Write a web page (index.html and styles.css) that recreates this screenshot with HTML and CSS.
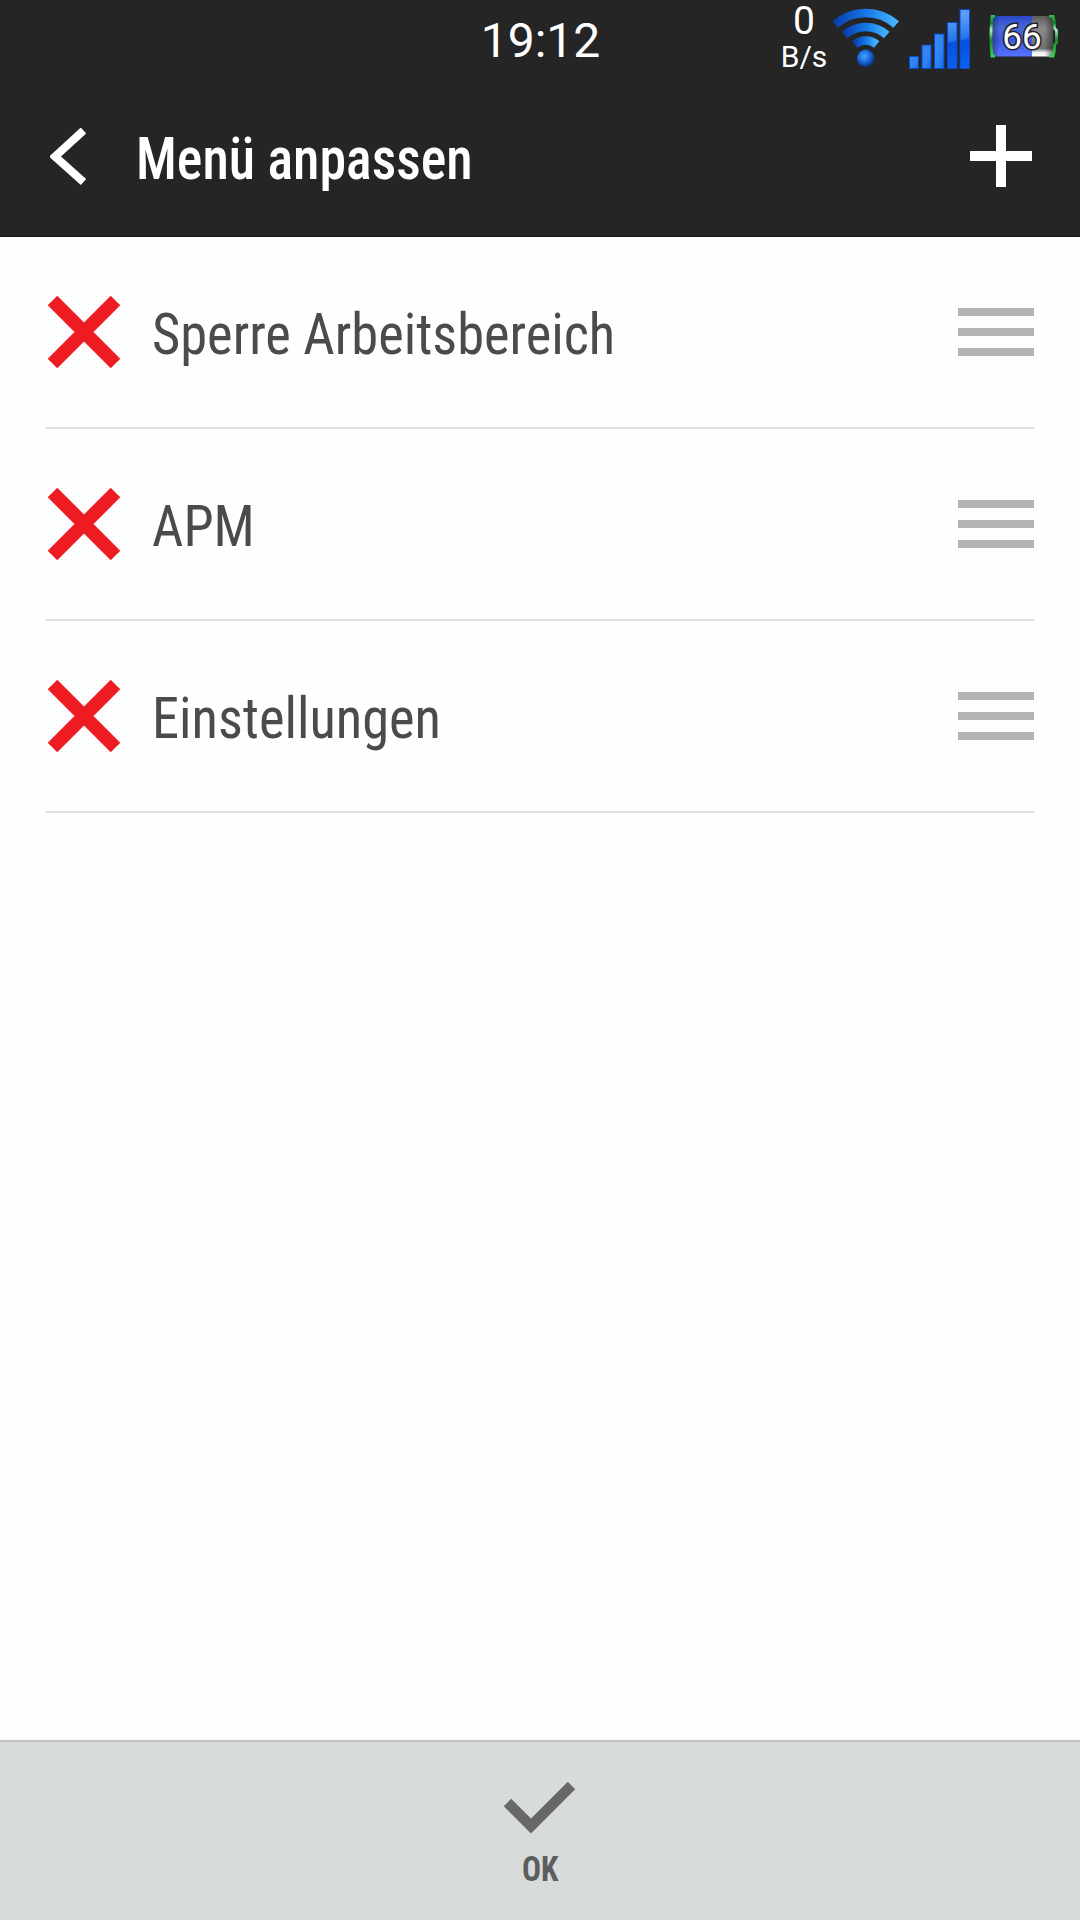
FILE: index.html
```html
<!DOCTYPE html>
<html lang="de">
<head>
<meta charset="utf-8">
<title>Menü anpassen</title>
<link rel="stylesheet" href="styles.css">
</head>
<body>
<div class="screen">
  <header class="header">
    <div class="status">
      <span class="clock">19:12</span>
      <div class="tray">
        <div class="speed"><span class="speed-value">0</span><span class="speed-unit">B/s</span></div>
        <svg class="wifi" width="70" height="68" viewBox="0 0 70 68">
          <defs>
            <linearGradient id="arc" x1="0" x2="1" y1="0" y2="0"><stop offset="0" stop-color="#0a3fae"/><stop offset=".5" stop-color="#1477e6"/><stop offset="1" stop-color="#45b4ff"/></linearGradient>
            <radialGradient id="dot" cx=".42" cy=".38" r=".62"><stop offset="0" stop-color="#48a5fb"/><stop offset=".5" stop-color="#1c6fe0"/><stop offset="1" stop-color="#0b3080"/></radialGradient>
          </defs>
          <g fill="none" stroke="url(#arc)" stroke-width="8.500">
            <path d="M5.200 24.500A46 46 0 0 1 66.200 24.500"/>
            <path d="M14.700 35A31.800 31.800 0 0 1 56.700 35"/>
            <path d="M24.700 44.500A17.500 17.500 0 0 1 46.700 44.500"/>
          </g>
          <circle cx="35.700" cy="58.300" r="8.700" fill="url(#dot)"/>
        </svg>
        <svg class="signal" width="62" height="62" viewBox="0 0 62 62">
          <defs>
            <linearGradient id="bar" gradientUnits="userSpaceOnUse" x1="38" x2="48" y1="10" y2="60"><stop offset="0" stop-color="#5a9dfa"/><stop offset=".45" stop-color="#2775ee"/><stop offset=".5" stop-color="#0750df"/><stop offset="1" stop-color="#0b62ee"/></linearGradient>
            <linearGradient id="low" x1="0" x2="1" y1="0" y2="1"><stop offset="0" stop-color="#3a86f2"/><stop offset=".6" stop-color="#2f82f2"/><stop offset="1" stop-color="#1268ee"/></linearGradient>
          </defs>
          <g fill="url(#low)" stroke="#0a48c4" stroke-width="1">
            <rect x=".5" y="48.500" width="9" height="12"/>
            <rect x="13" y="37" width="9" height="23.500"/>
            <rect x="25.500" y="26" width="9.500" height="34.500"/>
          </g>
          <g fill="url(#bar)" stroke="#0a48c4" stroke-width="1">
            <rect x="38.500" y="14.500" width="9.500" height="46"/>
            <rect x="51" y="1.500" width="9.500" height="59"/>
          </g>
        </svg>
        <svg class="battery" width="69" height="44" viewBox="0 0 69 44">
          <defs>
            <linearGradient id="charge" x1="0" x2="0" y1="0" y2="1"><stop offset="0" stop-color="#2947c8"/><stop offset=".3" stop-color="#4a68da"/><stop offset=".6" stop-color="#3c59e4"/><stop offset="1" stop-color="#5573ff"/></linearGradient>
            <linearGradient id="empty" x1="0" x2="0" y1="0" y2="1"><stop offset="0" stop-color="#5b5b5b"/><stop offset=".3" stop-color="#8c8c8c"/><stop offset=".8" stop-color="#707070"/><stop offset=".9" stop-color="#eee"/><stop offset="1" stop-color="#fff"/></linearGradient>
            <linearGradient id="rim" gradientUnits="userSpaceOnUse" x1="0" x2="0" y1="0" y2="42"><stop offset="0" stop-color="#35c04a"/><stop offset=".2" stop-color="#0b8a28"/><stop offset=".35" stop-color="#b8eec2"/><stop offset=".6" stop-color="#178a2b"/><stop offset="1" stop-color="#35d84c"/></linearGradient>
            <linearGradient id="shade" x1="0" x2="1" y1="0" y2="0"><stop offset="0" stop-color="#111" stop-opacity=".45"/><stop offset=".14" stop-color="#111" stop-opacity="0"/><stop offset=".86" stop-color="#111" stop-opacity="0"/><stop offset="1" stop-color="#111" stop-opacity=".5"/></linearGradient>
          </defs>
          <rect x="2" y="1" width="41" height="40.500" fill="url(#charge)"/>
          <rect x="43" y="1" width="21" height="40.500" fill="url(#empty)"/>
          <rect x="2" y="1" width="62" height="40.500" fill="url(#shade)"/>
          <path d="M6 1.200H3Q.800 21 3 41.200H6M60 1.200H64Q66 8 65.500 13L67.500 15.500V27.500L65.500 30Q66 36 64 41.200H60" fill="none" stroke="url(#rim)" stroke-width="2.800"/>
          <text class="battery-text" x="33" y="34" text-anchor="middle">66</text>
        </svg>
      </div>
    </div>
    <div class="bar">
      <svg class="back" width="37" height="57" viewBox="0 0 37 57"><path d="M33.500 2.500L5 28.500L33.500 54" fill="none" stroke="#fff" stroke-width="8"/></svg>
      <h1 class="title">Menü anpassen</h1>
      <svg class="add" width="62" height="62" viewBox="0 0 62 62"><path d="M26 0h10v26h26v10H36v26H26V36H0V26h26z" fill="#fff"/></svg>
    </div>
  </header>
  <main class="list">
    <div class="row">
      <svg class="remove" width="74" height="74" viewBox="0 0 74 74"><path d="M5.500 5.500L68.500 68.500M68.500 5.500L5.500 68.500" stroke="#ed1c22" stroke-width="13.500"/></svg>
      <span class="label">Sperre Arbeitsbereich</span>
      <span class="handle"></span>
    </div>
    <div class="row">
      <svg class="remove" width="74" height="74" viewBox="0 0 74 74"><path d="M5.500 5.500L68.500 68.500M68.500 5.500L5.500 68.500" stroke="#ed1c22" stroke-width="13.500"/></svg>
      <span class="label">APM</span>
      <span class="handle"></span>
    </div>
    <div class="row">
      <svg class="remove" width="74" height="74" viewBox="0 0 74 74"><path d="M5.500 5.500L68.500 68.500M68.500 5.500L5.500 68.500" stroke="#ed1c22" stroke-width="13.500"/></svg>
      <span class="label">Einstellungen</span>
      <span class="handle"></span>
    </div>
  </main>
  <footer class="footer">
    <svg class="check" width="72" height="53" viewBox="0 0 72 53"><path d="M3.500 20.500L27 44L67.500 3.500" fill="none" stroke="#686868" stroke-width="10.500"/></svg>
    <span class="ok">OK</span>
  </footer>
</div>
</body>
</html>
```
FILE: styles.css
```css
* { box-sizing: border-box; }
body {
  margin: 0;
  font-family: Roboto, sans-serif;
}
svg { display: block; flex: none; }
.screen {
  width: 1080px;
  height: 1920px;
  display: flex;
  flex-direction: column;
  background: #fefefe;
}
.header {
  height: 237px;
  background: #252525;
  color: #fff;
  border-bottom: 1px solid #161616;
}
.status {
  height: 75px;
  display: grid;
  grid-template-columns: 1fr auto 1fr;
}
.clock {
  grid-column: 2;
  padding-left: 1px;
  font-size: 48px;
  line-height: 82px;
}
.tray {
  display: flex;
  justify-content: flex-end;
  align-items: flex-start;
  padding-right: 22px;
}
.speed {
  display: flex;
  flex-direction: column;
  align-items: center;
  width: 48px;
  margin-right: 2px;
}
.speed-value { font-size: 39px; line-height: 43px; }
.speed-unit { font-size: 30px; line-height: 28px; }
.wifi { margin-right: 9px; }
.signal { margin: 8px 18px 0 0; }
.battery { margin-top: 15px; }
.battery-text {
  font-size: 35px;
  fill: #fff;
  stroke: #222;
  stroke-width: 3px;
  paint-order: stroke;
}
.bar {
  height: 162px;
  display: flex;
  align-items: flex-start;
  padding: 50px 48px 0 50px;
}
.back { margin-top: 3px; }
.title,
.label,
.ok {
  font-family: "Roboto Condensed", Roboto, sans-serif;
  font-stretch: 75%;
}
.title {
  flex: 1;
  margin: 0 0 0 49px;
  font-size: 59px;
  font-weight: 500;
  line-height: 67px;
  transform: scaleX(.914);
  transform-origin: left;
}
.list {
  flex: 1;
  padding: 0 46px;
}
.row {
  height: 192px;
  display: flex;
  align-items: center;
  border-bottom: 2px solid #dedede;
}
.label {
  flex: 1;
  margin: 4px 0 0 31px;
  font-size: 58px;
  color: #4b4b4b;
  transform: scaleX(.939);
  transform-origin: left;
}
.remove { margin-left: 1px; }
.handle {
  width: 76px;
  height: 48px;
  background: repeating-linear-gradient(#b3b3b3 0 8px, transparent 8px 20px);
}
.footer {
  height: 180px;
  display: flex;
  flex-direction: column;
  align-items: center;
  background: #d7dbda;
  border-top: 2px solid #bec2c1;
  padding-top: 40px;
}
.ok {
  margin-top: 14px;
  font-size: 35px;
  font-weight: 700;
  line-height: 41px;
  color: #5c5e5d;
  transform: scaleX(.9);
}
```
